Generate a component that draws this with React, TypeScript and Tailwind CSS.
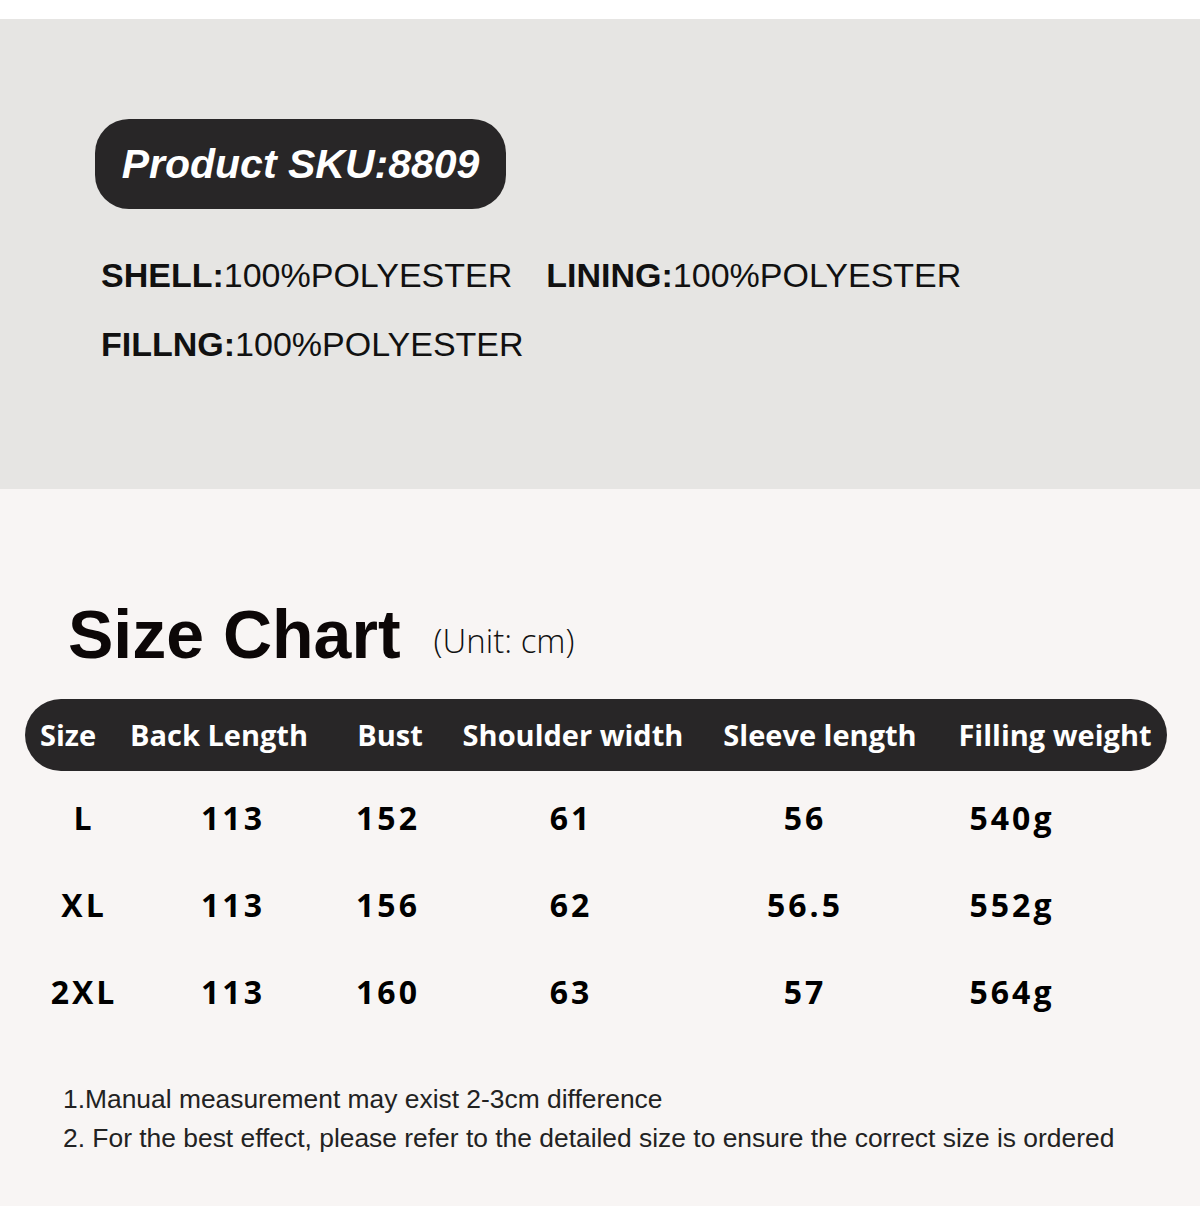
const rows = [
  { size: 'L', back: '113', bust: '152', shoulder: '61', sleeve: '56', weight: '540g' },
  { size: 'XL', back: '113', bust: '156', shoulder: '62', sleeve: '56.5', weight: '552g' },
  { size: '2XL', back: '113', bust: '160', shoulder: '63', sleeve: '57', weight: '564g' },
]

const headers = [
  { label: 'Size', w: 'w-[86px]' },
  { label: 'Back Length', w: 'w-[216px]' },
  { label: 'Bust', w: 'w-[126px]' },
  { label: 'Shoulder width', w: 'w-[240px]' },
  { label: 'Sleeve length', w: 'w-[254px]' },
  { label: 'Filling weight', w: 'w-[216px]' },
]

// body columns are centred a bit differently from the header in the artwork
const colW = ['w-[144px]', 'w-[154px]', 'w-[156px]', 'w-[210px]', 'w-[258px]', 'w-[156px]']

export default function App() {
  return (
    <div className="w-[1200px] bg-white pt-[19px] pb-[20px]" style={{ fontFamily: '"Liberation Sans", Arial, sans-serif' }}>
      <section className="h-[470px] bg-[#e6e5e3] pl-[95px] pt-[100px]">
        <div className="inline-flex h-[90px] w-[411px] items-center justify-center rounded-[34px] bg-[#282627]">
          <span className="text-[41px] font-bold italic leading-none text-white">Product SKU:8809</span>
        </div>

        <div className="mt-[47px] flex flex-col gap-[31px] pl-[6px] text-[34px] leading-[38px] text-[#111]">
          <div className="flex gap-[34px]">
            <span><b className="font-bold">SHELL:</b>100%POLYESTER</span>
            <span><b className="font-bold">LINING:</b>100%POLYESTER</span>
          </div>
          <div>
            <b className="font-bold">FILLNG:</b>100%POLYESTER
          </div>
        </div>
      </section>

      <section className="h-[717px] bg-[#f8f5f4] pt-[111px]">
        <div className="flex items-end pl-[68px]">
          <h1 className="text-[68px] font-bold leading-[68px] text-[#0c0707]">Size Chart</h1>
          <span className="mb-[11px] ml-[33px] text-[33px] font-light leading-none text-[#111]" style={{ fontFamily: '"Open Sans", sans-serif' }}>
            (Unit: cm)
          </span>
        </div>

        <div style={{ fontFamily: '"Open Sans", sans-serif' }}>
          <div className="mx-[25px] mt-[31px] flex h-[72px] w-[1142px] items-center rounded-full bg-[#282627] text-[29px] font-bold text-white">
            {headers.map(h => (
              <div key={h.label} className={`${h.w} shrink-0 whitespace-nowrap text-center`}>{h.label}</div>
            ))}
          </div>

          <div className="mt-[3px] pl-[12px]">
            {rows.map(r => (
              <div key={r.size} className="flex h-[87px] items-center text-[32px] font-bold tracking-[3px] text-black">
                {[r.size, r.back, r.bust, r.shoulder, r.sleeve, r.weight].map((v, i) => (
                  <div key={i} className={`${colW[i]} shrink-0 text-center`}>{v}</div>
                ))}
              </div>
            ))}
          </div>
        </div>

        <div className="mt-[51px] flex flex-col gap-[13px] pl-[63px] text-[26.4px] leading-[26px] text-[#222]">
          <p>1.Manual measurement may exist 2-3cm difference</p>
          <p>2. For the best effect, please refer to the detailed size to ensure the correct size is ordered</p>
        </div>
      </section>
    </div>
  )
}
